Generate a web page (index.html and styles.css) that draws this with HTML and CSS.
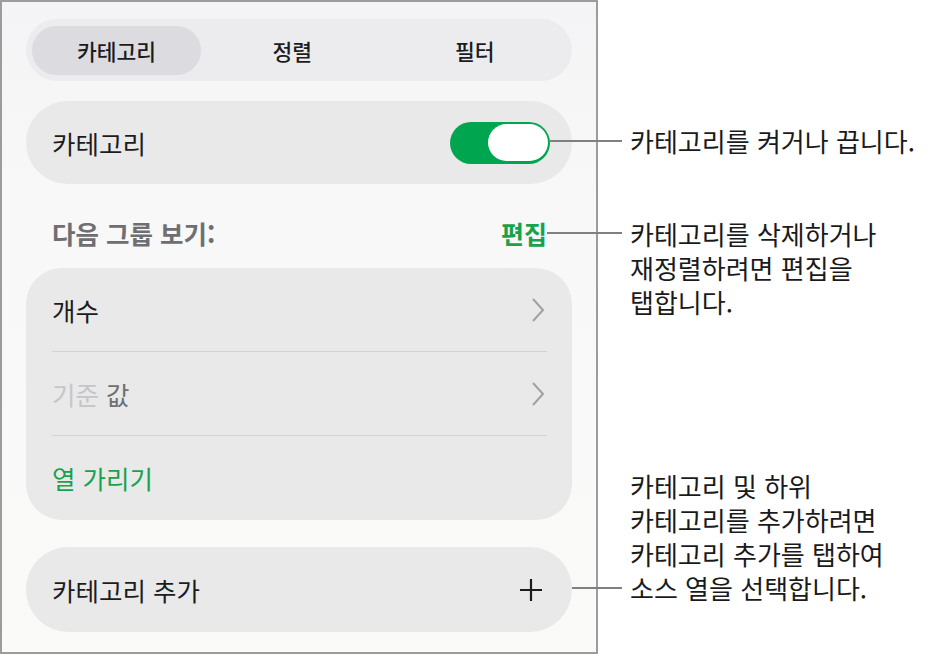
FILE: index.html
```html
<!DOCTYPE html>
<html lang="ko">
    <head>
        <meta name="viewport" content="width=device-width, initial-scale=1">
        <link rel="stylesheet" href="styles.css">
        <title>카테고리</title>
    </head>
    <body>
        <div class="page">
            <div class="panel">
                <div class="segmented">
                    <span class="seg active">카테고리</span>
                    <span class="seg">정렬</span>
                    <span class="seg">필터</span>
                </div>

                <div class="card row">
                    <span class="label">카테고리</span>
                    <span class="switch on"><span class="knob"></span></span>
                </div>

                <div class="section-head">
                    <span>다음 그룹 보기:</span>
                    <span class="edit">편집</span>
                </div>

                <div class="card group">
                    <div class="item">
                        <span class="label">개수</span>
                        <svg class="chevron" width="14" height="26" viewBox="0 0 14 26"><polyline points="2,2 12,13 2,24"/></svg>
                    </div>
                    <div class="item">
                        <span class="label"><span class="dim">기준</span> <span class="muted">값</span></span>
                        <svg class="chevron" width="14" height="26" viewBox="0 0 14 26"><polyline points="2,2 12,13 2,24"/></svg>
                    </div>
                    <div class="item">
                        <span class="label green">열 가리기</span>
                    </div>
                </div>

                <div class="card row add">
                    <span class="label">카테고리 추가</span>
                    <svg class="plus" width="24" height="24" viewBox="0 0 24 24"><path d="M12 1v22M1 12h22"/></svg>
                </div>
            </div>

            <div class="notes">
                <p class="note note-toggle">카테고리를 켜거나 끕니다.</p>
                <p class="note note-edit">카테고리를 삭제하거나<br>재정렬하려면 편집을<br>탭합니다.</p>
                <p class="note note-add">카테고리 및 하위<br>카테고리를 추가하려면<br>카테고리 추가를 탭하여<br>소스 열을 선택합니다.</p>
            </div>
        </div>
    </body>
</html>
```

FILE: styles.css
```css
body {
    margin: 0;
    background: #fff;
    color: #1c1c1e;
    font-family: "Noto Sans CJK KR", "Noto Sans", sans-serif;
}

.page {
    display: flex;
    width: 928px;
    height: 654px;
}

/* left-hand options panel */
.panel {
    box-sizing: border-box;
    width: 598px;
    height: 654px;
    padding: 17px 24px 0;
    border: 2px solid #9c9c9c;
    background: linear-gradient(#f4f4f6, #f8f8f8 30%, #fafaf9);
}

.segmented {
    box-sizing: border-box;
    display: flex;
    align-items: center;
    height: 62px;
    padding: 0 6px;
    border-radius: 31px;
    background: #ececee;
}

.seg {
    flex: 1;
    height: 49px;
    line-height: 49px;
    text-align: center;
    font-size: 21.5px;
    font-weight: 500;
    border-radius: 25px;
}

.seg.active {
    flex: 0 0 169px;
    background: #dcdce0;
}

.card {
    background: #e9e9ea;
}

.row {
    box-sizing: border-box;
    display: flex;
    align-items: center;
    justify-content: space-between;
    height: 83px;
    margin-top: 20px;
    padding: 0 22px 0 26px;
    border-radius: 42px;
}

.label {
    font-size: 25.5px;
    line-height: 30px;
}

.switch {
    box-sizing: border-box;
    display: flex;
    align-items: center;
    justify-content: flex-end;
    width: 100px;
    height: 42px;
    padding: 0 2px;
    border-radius: 21px;
    background: #00a54f;
}

.knob {
    width: 60px;
    height: 37px;
    border-radius: 19px;
    background: #fff;
}

.section-head {
    display: flex;
    justify-content: space-between;
    margin: 34px 25px 20px 26px;
    line-height: 30px;
    font-size: 25.5px;
    font-weight: 600;
    color: #6e6e73;
}

.edit {
    color: #17a24b;
    font-size: 25px;
    font-weight: 700;
}

.group {
    border-radius: 36px;
}

.item {
    position: relative;
    box-sizing: border-box;
    display: flex;
    align-items: center;
    justify-content: space-between;
    height: 84px;
    padding: 0 27px 0 26px;
}

.item + .item::before {
    content: "";
    position: absolute;
    top: -1px;
    left: 26px;
    right: 25px;
    height: 1px;
    background: #d2d2d4;
}

.chevron polyline {
    fill: none;
    stroke: #a1a1a5;
    stroke-width: 2;
}

.dim {
    color: #c5c5c9;
}

.muted {
    color: #6f6f72;
}

.green {
    color: #17a24b;
}

.add {
    height: 85px;
    margin-top: 27px;
    padding-right: 29px;
}

.plus path {
    stroke: #1c1c1e;
    stroke-width: 2.2;
}

/* callouts on the right */
.notes {
    display: flex;
    flex-direction: column;
    padding-left: 32px;
}

.note {
    position: relative;
    margin: 0;
    font-size: 26px;
    line-height: 34px;
    color: #1a1a1a;
    white-space: nowrap;
}

.note::before {
    content: "";
    position: absolute;
    height: 2px;
    background: #808080;
}

.note-toggle {
    margin-top: 124px;
}

.note-toggle::before {
    top: 16px;
    left: -80px;
    width: 72px;
}

.note-edit {
    margin-top: 59px;
}

.note-edit::before {
    top: 15px;
    left: -83px;
    width: 75px;
}

.note-add {
    margin-top: 150px;
}

.note-add::before {
    top: 118px;
    left: -58px;
    width: 50px;
}
```
